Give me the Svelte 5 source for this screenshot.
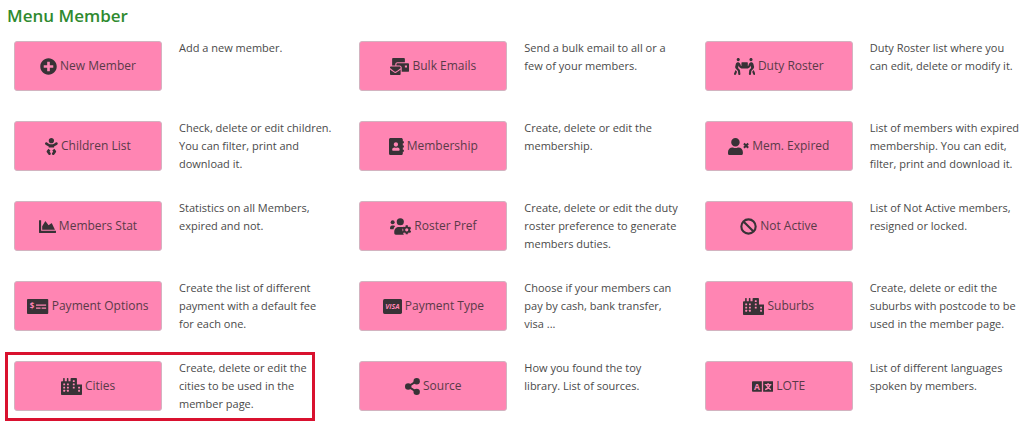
<script lang="ts">
    const INK = "#383236";
    const PINK = "#ff85b3";

    interface MenuItem {
        label: string;
        icon: string;
        text: string[];
        active?: boolean;
    }

    // viewBox width of every icon, the height is always 512
    const widths: Record<string, number> = {
        plus: 512,
        mail: 576,
        carry: 640,
        baby: 384,
        book: 448,
        expired: 640,
        chart: 512,
        gear: 640,
        ban: 512,
        check: 640,
        visa: 576,
        city: 640,
        share: 448,
        language: 640
    };

    const paths: Record<string, string> = {
        plus: "M256 8C119 8 8 119 8 256s111 248 248 248 248-111 248-248S393 8 256 8zm144 276c0 6.600-5.400 12-12 12h-92v92c0 6.600-5.400 12-12 12h-56c-6.600 0-12-5.400-12-12v-92h-92c-6.600 0-12-5.400-12-12v-56c0-6.600 5.400-12 12-12h92v-92c0-6.600 5.400-12 12-12h56c6.600 0 12 5.400 12 12v92h92c6.600 0 12 5.400 12 12v56z",
        mail: "M160 448c-25.600 0-51.200-22.400-64-32-64-44.800-83.200-60.800-96-70.400V480c0 17.670 14.330 32 32 32h256c17.670 0 32-14.330 32-32V345.600c-12.800 9.600-32 25.600-96 70.400-12.800 9.600-38.400 32-64 32zm128-192H32c-17.670 0-32 14.330-32 32v16c25.600 19.200 22.400 19.200 115.200 86.400 9.600 6.400 28.800 25.600 44.800 25.600s35.200-19.200 44.800-22.400c92.800-67.200 89.600-67.200 115.200-86.400V288c0-17.670-14.330-32-32-32zm256-96H224c-17.670 0-32 14.330-32 32v32h96c33.210 0 60.590 25.420 63.710 57.820l.29-.22V416h192c17.670 0 32-14.330 32-32V192c0-17.670-14.330-32-32-32zm-32 128h-64v-64h64v64zm-352-96c0-35.290 28.710-64 64-64h224V32c0-17.670-14.330-32-32-32H96C78.330 0 64 14.330 64 32v192h96v-32z",
        carry: "M128 96c26.500 0 48-21.500 48-48S154.500 0 128 0 80 21.500 80 48s21.500 48 48 48zm384 0c26.500 0 48-21.500 48-48S538.500 0 512 0s-48 21.500-48 48 21.500 48 48 48zm125.700 372.100l-44-110-41.100 46.400-2 18.200 27.700 69.200c5 12.500 17 20.100 29.700 20.100 4 0 8-.7 11.900-2.300 16.400-6.600 24.400-25.200 17.800-41.600zm-34.200-209.800L585 178.100c-4.600-20-18.600-36.800-37.500-44.900-18.500-8-39-6.700-56.100 3.300-22.700 13.400-39.700 34.500-48.100 59.400L432 229.800 416 240v-96c0-8.800-7.200-16-16-16H240c-8.800 0-16 7.200-16 16v96l-16.100-10.200-11.300-33.900c-8.300-25-25.400-46-48.100-59.400-17.200-10-37.600-11.300-56.100-3.300-18.900 8.100-32.900 24.900-37.500 44.900l-18.400 80.200c-4.600 20 .7 41.200 14.400 56.700l67.200 75.900 10.100 92.600C130 499.800 143.800 512 160 512c1.200 0 2.300-.1 3.500-.2 17.600-1.900 30.200-17.700 28.300-35.300l-10.100-92.800c-1.500-13-6.900-25.100-15.600-35l-43.300-49 17.600-70.300 6.800 20.400c4.100 12.500 11.900 23.400 24.500 32.600l51.100 32.500c4.600 2.900 12.100 4.600 17.200 5h160c5.100-.4 12.600-2.100 17.200-5l51.100-32.500c12.600-9.200 20.400-20 24.500-32.600l6.800-20.400 17.600 70.300-43.300 49c-8.700 9.900-14.100 22-15.600 35l-10.100 92.800c-1.900 17.600 10.800 33.400 28.300 35.300 1.200.1 2.300.2 3.500.2 16.100 0 30-12.100 31.800-28.500l10.100-92.600 67.200-75.900c13.600-15.500 19-36.700 14.400-56.700zM46.300 358.100l-44 110c-6.600 16.400 1.400 35 17.800 41.600 16.800 6.600 35.100-1.700 41.600-17.800l27.700-69.200-2-18.200-41.100-46.400z",
        baby: "M192 160c44.200 0 80-35.800 80-80S236.200 0 192 0s-80 35.800-80 80 35.800 80 80 80zm-53.400 248.800l25.600-32-61.500-51.200L56.800 383c-11.400 14.200-11.700 34.400-.8 49l48 64c7.900 10.500 19.900 16 32 16 8.300 0 16.800-2.600 24-8 17.700-13.200 21.200-38.300 8-56l-29.400-39.200zm142.700-83.200l-61.500 51.200 25.600 32L216 448c-13.200 17.700-9.700 42.800 8 56 7.200 5.400 15.600 8 24 8 12.200 0 24.200-5.500 32-16l48-64c10.900-14.600 10.600-34.800-.8-49l-45.900-57.400zM376.700 145c-12.700-18.100-37.600-22.400-55.700-9.800l-40.600 28.500c-52.700 37-124.200 37-176.800 0L63 135.300C44.900 122.600 20 127 7.300 145-5.400 163.100-1 188 17 200.700l40.600 28.500c17 11.900 35.400 20.900 54.400 27.900V288h160v-30.800c19-7 37.400-16 54.400-27.900l40.600-28.500c18.100-12.800 22.400-37.700 9.700-55.800z",
        book: "M436 160c6.600 0 12-5.400 12-12v-40c0-6.600-5.400-12-12-12h-20V48c0-26.500-21.500-48-48-48H48C21.500 0 0 21.500 0 48v416c0 26.500 21.500 48 48 48h320c26.500 0 48-21.500 48-48v-48h20c6.600 0 12-5.400 12-12v-40c0-6.600-5.400-12-12-12h-20v-64h20c6.600 0 12-5.400 12-12v-40c0-6.600-5.400-12-12-12h-20v-64h20zm-228-32c35.300 0 64 28.700 64 64s-28.700 64-64 64-64-28.700-64-64 28.700-64 64-64zm112 236.800c0 10.600-10 19.200-22.400 19.200H118.400C106 384 96 375.400 96 364.800v-19.200c0-31.800 30.100-57.600 67.200-57.600h5c12.300 5.100 25.700 8 39.800 8s27.600-2.900 39.800-8h5c37.100 0 67.200 25.800 67.200 57.600v19.200z",
        expired: "M224 256c70.700 0 128-57.300 128-128S294.700 0 224 0 96 57.300 96 128s57.300 128 128 128zm89.600 32h-16.700c-22.200 10.200-46.900 16-72.900 16s-50.600-5.800-72.900-16h-16.700C60.200 288 0 348.200 0 422.400V464c0 26.500 21.500 48 48 48h352c26.500 0 48-21.500 48-48v-41.600c0-74.200-60.200-134.400-134.400-134.400z",
        chart: "M500 384c6.600 0 12 5.400 12 12v40c0 6.600-5.400 12-12 12H12c-6.600 0-12-5.400-12-12V76c0-6.600 5.400-12 12-12h40c6.600 0 12 5.400 12 12v308h436zM372.700 159.500L288 216l-85.300-113.700c-5.100-6.800-15.500-6.300-19.900 1L96 248v104h384l-89.900-187.800c-3.200-6.500-11.400-8.700-17.400-4.700z",
        city: "M616 192H480V24c0-13.260-10.740-24-24-24H312c-13.260 0-24 10.740-24 24v72h-64V16c0-8.840-7.160-16-16-16h-16c-8.840 0-16 7.160-16 16v80h-64V16c0-8.840-7.160-16-16-16H80c-8.840 0-16 7.160-16 16v80H24c-13.260 0-24 10.740-24 24v360c0 17.670 14.330 32 32 32h576c17.670 0 32-14.330 32-32V216c0-13.260-10.750-24-24-24z"
    };

    const city_windows = [
        [68, 164], [68, 260], [68, 356],
        [180, 164], [180, 260], [180, 356],
        [356, 68], [356, 164], [356, 260],
        [516, 260], [516, 356]
    ];

    const items: MenuItem[] = [
        { label: "New Member", icon: "plus", text: ["Add a new member."] },
        { label: "Bulk Emails", icon: "mail", text: ["Send a bulk email to all or a", "few of your members."] },
        { label: "Duty Roster", icon: "carry", text: ["Duty Roster list where you", "can edit, delete or modify it."] },
        { label: "Children List", icon: "baby", text: ["Check, delete or edit children.", "You can filter, print and", "download it."] },
        { label: "Membership", icon: "book", text: ["Create, delete or edit the", "membership."] },
        { label: "Mem. Expired", icon: "expired", text: ["List of members with expired", "membership. You can edit,", "filter, print and download it."] },
        { label: "Members Stat", icon: "chart", text: ["Statistics on all Members,", "expired and not."] },
        { label: "Roster Pref", icon: "gear", text: ["Create, delete or edit the duty", "roster preference to generate", "members duties."] },
        { label: "Not Active", icon: "ban", text: ["List of Not Active members,", "resigned or locked."] },
        { label: "Payment Options", icon: "check", text: ["Create the list of different", "payment with a default fee", "for each one."] },
        { label: "Payment Type", icon: "visa", text: ["Choose if your members can", "pay by cash, bank transfer,", "visa ..."] },
        { label: "Suburbs", icon: "city", text: ["Create, delete or edit the", "suburbs with postcode to be", "used in the member page."] },
        { label: "Cities", icon: "city", text: ["Create, delete or edit the", "cities to be used in the", "member page."], active: true },
        { label: "Source", icon: "share", text: ["How you found the toy", "library. List of sources."] },
        { label: "LOTE", icon: "language", text: ["List of different languages", "spoken by members."] }
    ];
</script>

<main>
    <h1>Menu Member</h1>
    <div class="menu">
        {#each items as item}
            <div class="item" class:active={item.active}>
                <button type="button">
                    <svg viewBox="0 0 {widths[item.icon]} 512" fill={INK} aria-hidden="true">
                        {#if paths[item.icon]}
                            <path d={paths[item.icon]} />
                        {/if}
                        {#if item.icon === "expired"}
                            <path d="M480 168l128 128M608 168L480 296" fill="none" stroke={INK} stroke-width="60" />
                        {:else if item.icon === "city"}
                            {#each city_windows as [x, y]}
                                <rect {x} {y} width="56" height="56" rx="10" fill={PINK} />
                            {/each}
                        {:else if item.icon === "gear"}
                            <circle cx="80" cy="130" r="60" />
                            <circle cx="310" cy="112" r="108" />
                            <path d="M0 310c0-44 26-82 64-82h50c20 0 34 8 44 20-30 22-46 50-50 94H32c-18 0-32-14-32-32z" />
                            <path d="M128 424c0-90 52-156 134-156h90c40 0 68 20 78 50l-30 160 20 24H176c-27 0-48-21-48-48z" />
                            <circle cx="504" cy="356" r="120" fill={INK} stroke={PINK} stroke-width="28" />
                            <path d="M504 220v272M386 288l236 136M386 424l236-136" fill="none" stroke={INK} stroke-width="64" />
                            <circle cx="504" cy="356" r="48" fill={PINK} />
                        {:else if item.icon === "ban"}
                            <circle cx="256" cy="256" r="216" fill="none" stroke={INK} stroke-width="64" />
                            <path d="M104 104l304 304" stroke={INK} stroke-width="64" />
                        {:else if item.icon === "check"}
                            <rect x="0" y="32" width="640" height="448" rx="26" />
                            <text x="150" y="340" class="dollar" fill={PINK}>$</text>
                            <path d="M272 216h304M272 304h136M440 304h136" stroke={PINK} stroke-width="34" />
                        {:else if item.icon === "visa"}
                            <rect x="0" y="32" width="576" height="448" rx="48" />
                            <text x="284" y="332" class="visa" fill={PINK}>VISA</text>
                        {:else if item.icon === "share"}
                            <path d="M352 96L96 256l256 160" fill="none" stroke={INK} stroke-width="60" />
                            <circle cx="352" cy="96" r="96" />
                            <circle cx="96" cy="256" r="96" />
                            <circle cx="352" cy="416" r="96" />
                        {:else if item.icon === "language"}
                            <path d="M24 96h272v320H24c-13 0-24-11-24-24V120c0-13 11-24 24-24zM336 96h280c13 0 24 11 24 24v272c0 13-11 24-24 24H336z" />
                            <text x="152" y="352" class="letter" fill={PINK}>A</text>
                            <path d="M384 196h200M484 150v46M434 212c20 66 70 112 136 140M546 212c-22 66-76 112-150 140" fill="none" stroke={PINK} stroke-width="38" />
                        {/if}
                    </svg>
                    <span>{item.label}</span>
                </button>
                <p>
                    {#each item.text as line, i}
                        {#if i > 0}<br>{/if}{line}
                    {/each}
                </p>
            </div>
        {/each}
    </div>
</main>

<style>
    :global(body){
        margin: 0;
        background-color: white;
        overflow-x: hidden;
    }
    main{
        padding: 4px 0 16px 7px;
        font-family: "Open Sans", "Noto Sans", sans-serif;
        color: #4a4a4a;
    }
    h1{
        margin: 0;
        font-size: 17px;
        line-height: 24px;
        font-weight: 600;
        color: #2f8a2f;
    }

    .menu{
        display: grid;
        grid-template-columns: repeat(3, 1fr);
        row-gap: 30px;
        margin-top: 13px;
        margin-right: -26px;
        padding-left: 7px;
    }
    .item{
        position: relative;
        display: flex;
        height: 50px;
        gap: 17px;
    }
    /* frame drawn round the current entry */
    .item.active::after{
        content: "";
        position: absolute;
        inset: -9px 44px -10px -9px;
        border: 3px solid #d9112f;
        pointer-events: none;
    }

    button{
        display: flex;
        flex: none;
        width: 148px;
        justify-content: center;
        align-items: center;
        gap: 3px;
        padding: 0;
        border: 1px solid #d3b3c0;
        border-radius: 3px;
        background-color: #ff85b3;
        font-family: inherit;
        font-size: 12px;
        line-height: 18px;
        color: #5a3a48;
        cursor: pointer;
    }
    svg{
        flex: none;
        height: 17px;
    }
    p{
        margin: 0;
        margin-top: -2px;
        font-size: 11px;
        line-height: 18px;
        white-space: nowrap;
    }

    .dollar, .visa, .letter{
        font-family: "Open Sans", sans-serif;
        font-weight: 700;
        text-anchor: middle;
    }
    .dollar{
        font-size: 240px;
    }
    .visa{
        font-size: 210px;
        font-style: italic;
    }
    .letter{
        font-size: 260px;
    }
</style>
